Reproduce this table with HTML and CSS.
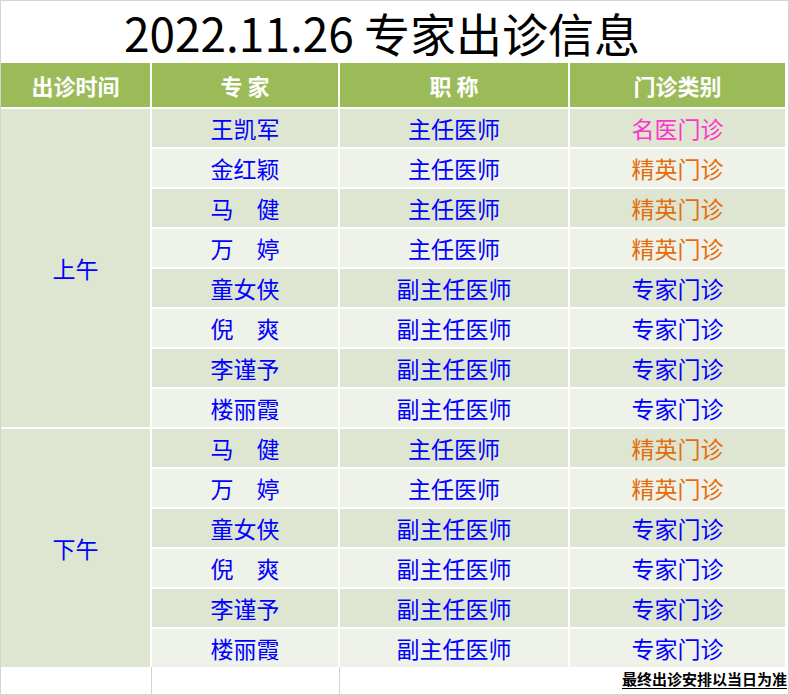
FILE: index.html
```html
<!DOCTYPE html>
<html lang="zh-CN">
<head>
<meta charset="utf-8">
<title>2022.11.26 专家出诊信息</title>
<link rel="stylesheet" href="styles.css">
</head>
<body>
<div class="sheet">
  <div class="title">2022.11.26 专家出诊信息</div>
  <div class="grid">
    <div class="hd">出诊时间</div>
    <div class="hd">专 家</div>
    <div class="hd">职 称</div>
    <div class="hd">门诊类别</div>

    <div class="time am">上午</div>
    <div class="c a">王凯军</div><div class="c a">主任医师</div><div class="c a pink">名医门诊</div>
    <div class="c b">金红颖</div><div class="c b">主任医师</div><div class="c b orange">精英门诊</div>
    <div class="c a">马　健</div><div class="c a">主任医师</div><div class="c a orange">精英门诊</div>
    <div class="c b">万　婷</div><div class="c b">主任医师</div><div class="c b orange">精英门诊</div>
    <div class="c a">童女侠</div><div class="c a">副主任医师</div><div class="c a">专家门诊</div>
    <div class="c b">倪　爽</div><div class="c b">副主任医师</div><div class="c b">专家门诊</div>
    <div class="c a">李谨予</div><div class="c a">副主任医师</div><div class="c a">专家门诊</div>
    <div class="c b">楼丽霞</div><div class="c b">副主任医师</div><div class="c b">专家门诊</div>

    <div class="time pm">下午</div>
    <div class="c a">马　健</div><div class="c a">主任医师</div><div class="c a orange">精英门诊</div>
    <div class="c b">万　婷</div><div class="c b">主任医师</div><div class="c b orange">精英门诊</div>
    <div class="c a">童女侠</div><div class="c a">副主任医师</div><div class="c a">专家门诊</div>
    <div class="c b">倪　爽</div><div class="c b">副主任医师</div><div class="c b">专家门诊</div>
    <div class="c a">李谨予</div><div class="c a">副主任医师</div><div class="c a">专家门诊</div>
    <div class="c b">楼丽霞</div><div class="c b">副主任医师</div><div class="c b">专家门诊</div>
  </div>
  <div class="foot">
    <div class="fc f1"></div>
    <div class="fc f2"></div>
    <div class="fc f3"><span class="note">最终出诊安排以当日为准</span></div>
  </div>
</div>
</body>
</html>
```

FILE: styles.css
```css
html, body {
  margin: 0;
  padding: 0;
  background: #ffffff;
}
body {
  font-family: "Noto Sans CJK SC", "Noto Sans", sans-serif;
}
.sheet {
  width: 789px;
  height: 695px;
  box-sizing: border-box;
  border: 1px solid #d4d4d4;
  background: #ffffff;
  overflow: hidden;
}
.title {
  height: 62px;
  line-height: 62px;
  font-size: 46px;
  color: #000000;
  text-align: center;
  padding-right: 25px;
  white-space: nowrap;
}
.grid {
  display: grid;
  grid-template-columns: 149px 186px 228px 215px;
  grid-template-rows: 44px repeat(14, 38px);
  column-gap: 2px;
  row-gap: 2px;
}
.hd {
  background: #9bbb59;
  color: #ffffff;
  font-weight: bold;
  font-size: 22px;
  display: flex;
  align-items: center;
  justify-content: center;
  white-space: pre;
}
.sp {
  word-spacing: 3px;
}
.time {
  background: #dee6d2;
  color: #0000ff;
  font-size: 23px;
  display: flex;
  align-items: center;
  justify-content: center;
  grid-column: 1;
}
.am { grid-row: 2 / span 8; }
.pm { grid-row: 10 / span 6; }
.c {
  color: #0000ff;
  font-size: 23px;
  display: flex;
  align-items: center;
  justify-content: center;
  white-space: pre;
}
.a { background: #dee6d2; }
.b { background: #eff2e9; }
.pink { color: #ff33cc; }
.orange { color: #e46c0a; }
.foot {
  display: flex;
  height: 27px;
}
.fc {
  height: 27px;
  box-sizing: border-box;
}
.f1 {
  width: 151px;
  border-right: 1px solid #d4d4d4;
}
.f2 {
  width: 188px;
  border-right: 1px solid #d4d4d4;
}
.f3 {
  flex: 1;
  display: flex;
  justify-content: flex-end;
  align-items: flex-end;
  padding-right: 1px;
}
.note {
  font-size: 15px;
  font-weight: bold;
  color: #000000;
  line-height: 18px;
  border-bottom: 1px solid #000000;
  margin-bottom: 5px;
}
```
